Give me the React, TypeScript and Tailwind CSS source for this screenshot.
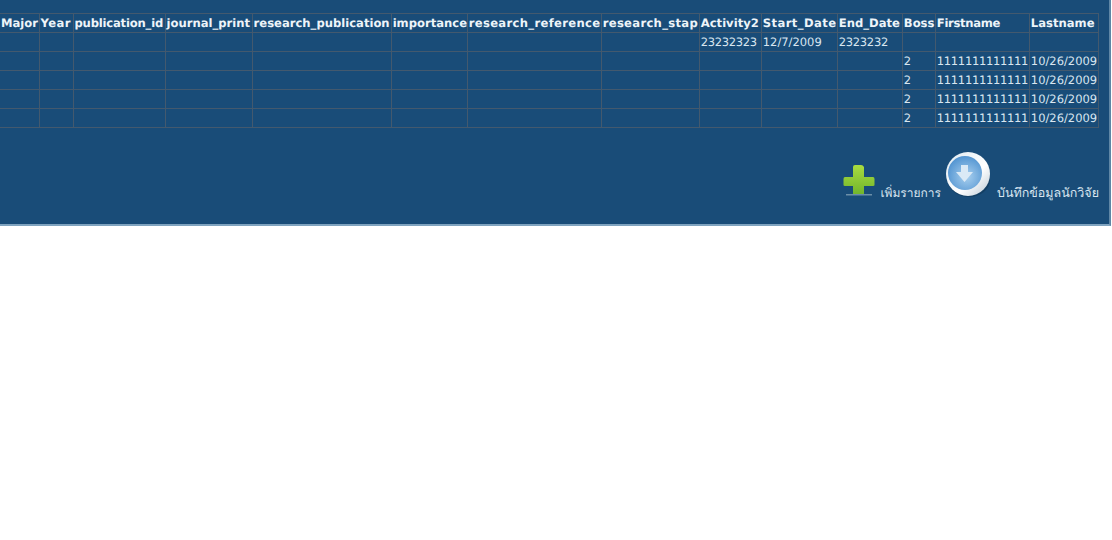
import React from 'react';

const columns = [
  { name: 'Major', width: 'w-[39px]', spacing: '' },
  { name: 'Year', width: 'w-[34px]', spacing: 'tracking-[0.4px]' },
  { name: 'publication_id', width: 'w-[92px]', spacing: 'tracking-[-0.2px]' },
  { name: 'journal_print', width: 'w-[87px]', spacing: '' },
  { name: 'research_publication', width: 'w-[139px]', spacing: '' },
  { name: 'importance', width: 'w-[76px]', spacing: '' },
  { name: 'research_reference', width: 'w-[134px]', spacing: 'tracking-[0.33px]' },
  { name: 'research_stap', width: 'w-[98px]', spacing: 'tracking-[0.3px]' },
  { name: 'Activity2', width: 'w-[62px]', spacing: '' },
  { name: 'Start_Date', width: 'w-[76px]', spacing: 'tracking-[0.4px]' },
  { name: 'End_Date', width: 'w-[65px]', spacing: '' },
  { name: 'Boss', width: 'w-[33px]', spacing: '' },
  { name: 'Firstname', width: 'w-[94px]', spacing: 'tracking-[-0.33px]' },
  { name: 'Lastname', width: 'w-[69px]', spacing: '' },
];

const blank = ['', '', '', '', '', '', '', ''];
const personRow = [...blank, '', '', '', '2', '1111111111111', '10/26/2009'];
const rows = [
  [...blank, '23232323', '12/7/2009', '2323232', '', '', ''],
  personRow,
  personRow,
  personRow,
  personRow,
];

const PlusIcon = () => (
  <svg width="32" height="31" viewBox="0 0 32 31" className="mb-[5px] shrink-0">
    <defs>
      <linearGradient id="plusFill" x1="0" y1="0" x2="0" y2="1">
        <stop offset="0" stopColor="#a9dc40" />
        <stop offset="1" stopColor="#72b52c" />
      </linearGradient>
    </defs>
    <rect x="3" y="29" width="26" height="1.5" fill="#7fa0b4" opacity="0.8" />
    <path d="M10 2Q10 0 12 0h6Q20 0 21 2V12h9Q31.500 12 31.500 14v6Q31.500 21 30 21H21v8H10V21H2Q.5 21 .5 20v-6Q.5 12 2 12h8Z" fill="url(#plusFill)" />
  </svg>
);

const SaveIcon = () => (
  <svg width="45" height="46" viewBox="0 0 45 46" className="mb-[3px] shrink-0">
    <defs>
      <linearGradient id="saveRing" x1="0" y1="0" x2="1" y2="1">
        <stop offset="0" stopColor="#dfeaf2" />
        <stop offset="0.6" stopColor="#ffffff" />
        <stop offset="1" stopColor="#b9c8d4" />
      </linearGradient>
      <radialGradient id="saveFace" cx="0.55" cy="0.6" r="0.65">
        <stop offset="0" stopColor="#a9d0ef" />
        <stop offset="1" stopColor="#4c90cf" />
      </radialGradient>
    </defs>
    <ellipse cx="23" cy="28" rx="21" ry="17" fill="#0f3454" opacity="0.55" />
    <circle cx="22" cy="22" r="22" fill="url(#saveRing)" />
    <circle cx="19" cy="21" r="17" fill="url(#saveFace)" />
    <path d="M15 13h7v7h5l-8.500 10L10 20h5Z" fill="#dbeaf6" />
  </svg>
);

const cellSpacing = (cell: string) => (/^\d+$/.test(cell) && cell.length > 1 ? 'tracking-[-0.3px]' : '');

export default function App() {
  return (
    <div className="min-h-[540px] bg-white font-['DejaVu_Sans','Noto_Sans',sans-serif] [text-rendering:geometricPrecision]">
      <div className="mr-px h-[226px] border-r-2 border-b-2 border-r-[#5f86a5] border-b-[#7fa3bf] bg-[#194c78] pt-[13px] text-[#d9e6f0]">
        <table className="w-[1099px] table-fixed border-collapse leading-[17px]">
          <thead>
            <tr className="h-[19px]">
              {columns.map((col) => (
                <th
                  key={col.name}
                  className={`${col.width} ${col.spacing} whitespace-nowrap border border-[#43596e] px-[1px] pt-px text-left text-[11.6px] font-bold text-[#edf4f9] first:border-l-0`}
                >
                  {col.name}
                </th>
              ))}
            </tr>
          </thead>
          <tbody>
            {rows.map((row, i) => (
              <tr key={i} className="h-[19px]">
                {row.map((cell, j) => (
                  <td
                    key={j}
                    className={`${cellSpacing(cell)} whitespace-nowrap border border-[#43596e] px-[1px] pt-px text-[11.5px] first:border-l-0`}
                  >
                    {cell}
                  </td>
                ))}
              </tr>
            ))}
          </tbody>
        </table>
        <div className="mt-[24px] flex w-[1099px] items-end justify-end font-['Noto_Sans','DejaVu_Sans',sans-serif] text-[12.5px] leading-[16px]">
          <PlusIcon />
          <span className="ml-[5px] text-[12px]">เพิ่มรายการ</span>
          <span className="ml-[5px]">
            <SaveIcon />
          </span>
          <span className="ml-[6px]">บันทึกข้อมูลนักวิจัย</span>
        </div>
      </div>
    </div>
  );
}
